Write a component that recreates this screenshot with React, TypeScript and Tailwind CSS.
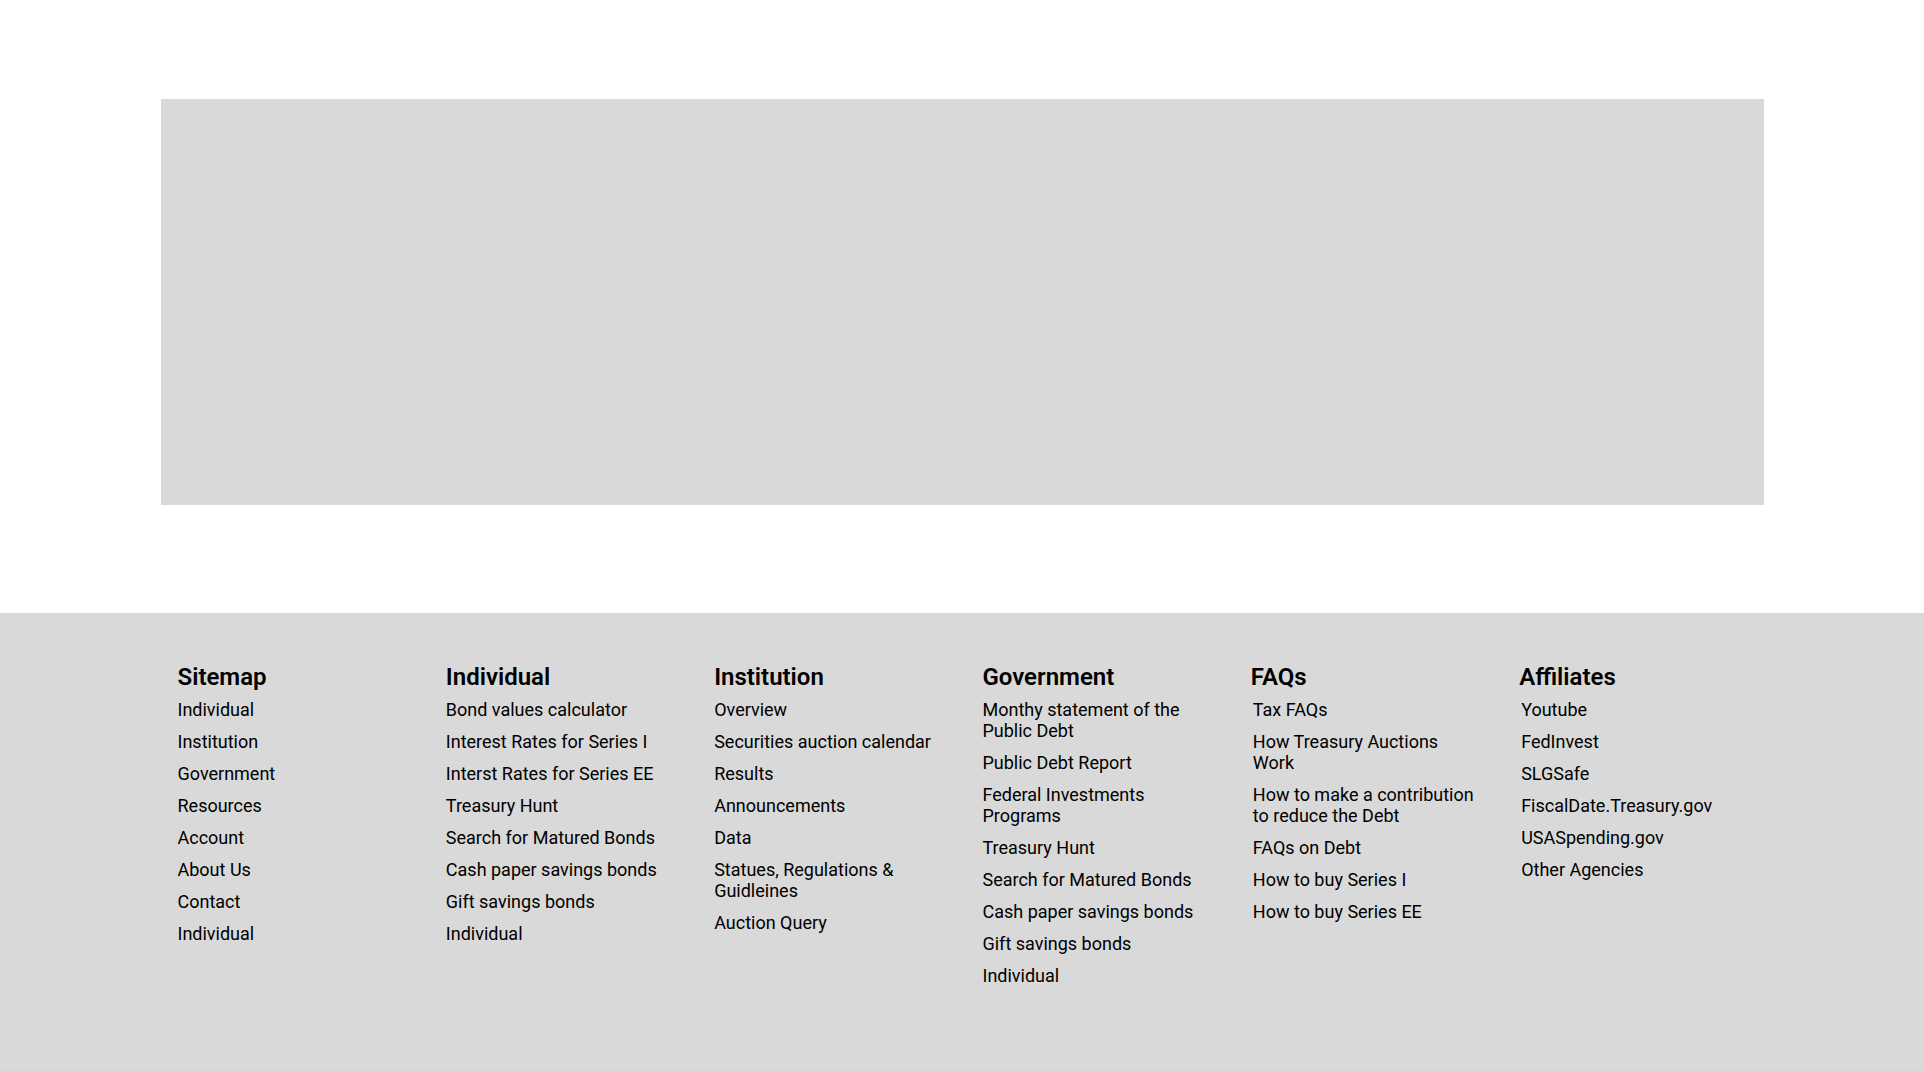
import React from "react";

interface FooterColumn {
	title: string;
	links: string[];
	indent?: boolean;
}

const columns: FooterColumn[] = [
	{
		title: "Sitemap",
		links: ["Individual", "Institution", "Government", "Resources", "Account", "About Us", "Contact", "Individual"],
	},
	{
		title: "Individual",
		links: [
			"Bond values calculator",
			"Interest Rates for Series I",
			"Interst Rates for Series EE",
			"Treasury Hunt",
			"Search for Matured Bonds",
			"Cash paper savings bonds",
			"Gift savings bonds",
			"Individual",
		],
	},
	{
		title: "Institution",
		links: [
			"Overview",
			"Securities auction calendar",
			"Results",
			"Announcements",
			"Data",
			"Statues, Regulations & Guidleines",
			"Auction Query",
		],
	},
	{
		title: "Government",
		links: [
			"Monthy statement of the Public Debt",
			"Public Debt Report",
			"Federal Investments Programs",
			"Treasury Hunt",
			"Search for Matured Bonds",
			"Cash paper savings bonds",
			"Gift savings bonds",
			"Individual",
		],
	},
	{
		title: "FAQs",
		indent: true,
		links: [
			"Tax FAQs",
			"How Treasury Auctions Work",
			"How to make a contribution to reduce the Debt",
			"FAQs on Debt",
			"How to buy Series I",
			"How to buy Series EE",
		],
	},
	{
		title: "Affiliates",
		indent: true,
		links: ["Youtube", "FedInvest", "SLGSafe", "FiscalDate.Treasury.gov", "USASpending.gov", "Other Agencies"],
	},
];

export default function App() {
	return (
		<div className="min-h-screen bg-white font-['Roboto',_'Liberation_Sans',_sans-serif] text-black">
			{/* Hero placeholder */}
			<div className="pt-[99px]">
				<div className="mx-auto h-[406px] w-[1603px] bg-[#d9d9d9]" />
			</div>

			{/* Footer */}
			<footer className="mt-[108px] min-h-[458px] bg-[#d9d9d9] pb-12 pt-12">
				<div className="mx-auto grid w-[1603px] grid-cols-6 gap-10 pl-[17px] pr-4">
					{columns.map((col) => (
						<div key={col.title} className="w-[224px]">
							<h3 className="mb-[6px] text-2xl font-semibold">{col.title}</h3>
							<ul className={col.indent ? "flex flex-col gap-[11px] pl-[2px]" : "flex flex-col gap-[11px]"}>
								{col.links.map((link, i) => (
									<li key={i} className="text-lg leading-[21px]">
										<a href="#" className="hover:underline">
											{link}
										</a>
									</li>
								))}
							</ul>
						</div>
					))}
				</div>
			</footer>
		</div>
	);
}
